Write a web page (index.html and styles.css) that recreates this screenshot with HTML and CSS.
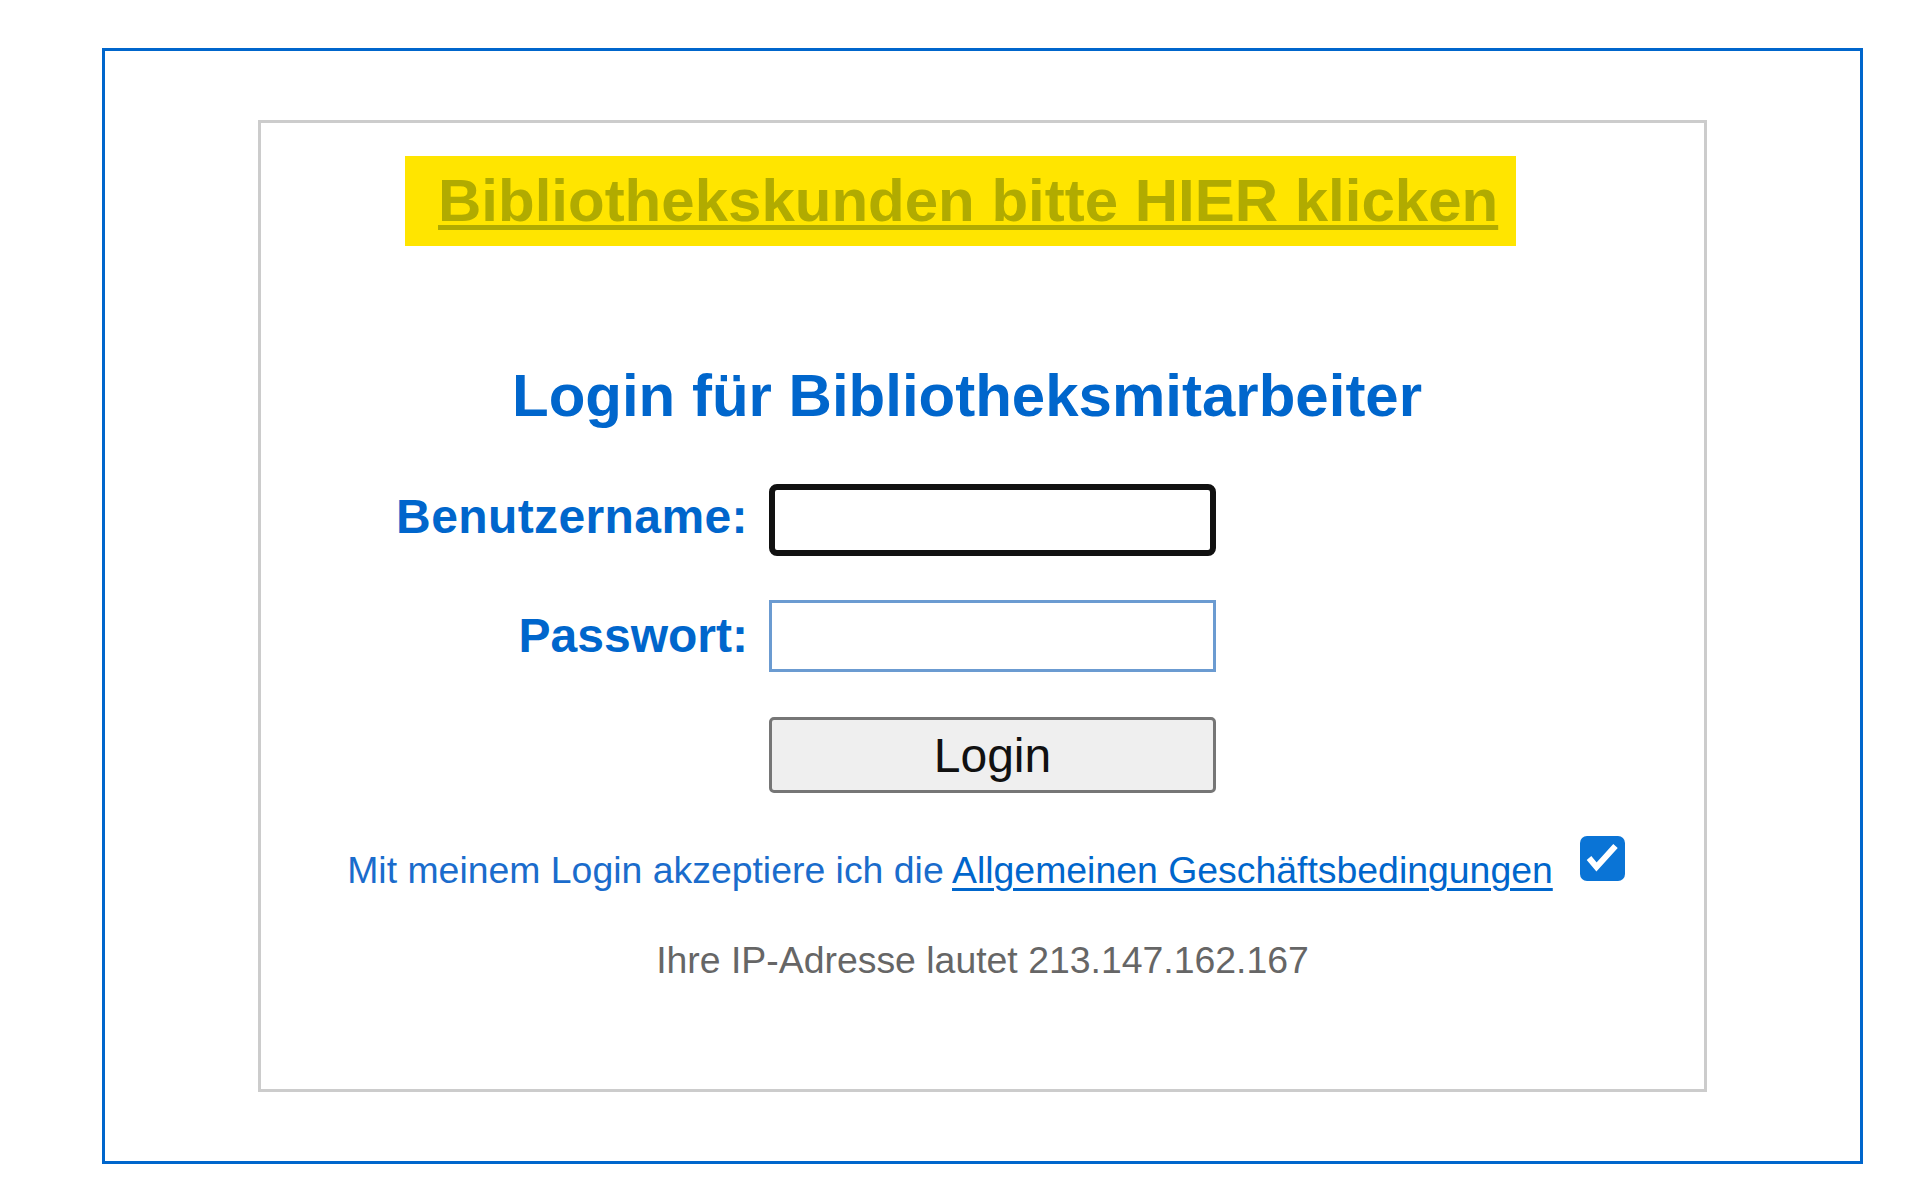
FILE: index.html
```html
<!DOCTYPE html>
<html lang="de">
<head>
    <meta charset="UTF-8">
    <meta name="viewport" content="width=device-width, initial-scale=1.0">
    <title>Login</title>
    <link rel="stylesheet" href="styles.css">
</head>
<body>
    <div class="frame">
        <div class="panel">
            <a href="#" class="customer-link">Bibliothekskunden bitte HIER klicken</a>

            <h1 class="title">Login für Bibliotheksmitarbeiter</h1>

            <form class="login-form" onsubmit="return false;">
                <label for="user" class="label label-user">Benutzername:</label>
                <input type="text" id="user" class="field field-focus">
                <label for="pass" class="label">Passwort:</label>
                <input type="password" id="pass" class="field">
                <span></span>
                <button type="submit" class="login-btn">Login</button>
            </form>

            <p class="terms">Mit meinem Login akzeptiere ich die <a href="#">Allgemeinen Geschäftsbedingungen</a><span class="check"><svg width="45" height="45" viewBox="0 0 45 45"><rect width="45" height="45" rx="7" fill="#0a74d6"/><polyline points="9,22 16.5,31 35.5,10" fill="none" stroke="#fff" stroke-width="6"/></svg></span></p>

            <p class="ip">Ihre IP-Adresse lautet 213.147.162.167</p>
        </div>
    </div>
</body>
</html>
```

FILE: styles.css
```css
body {
    margin: 0;
    font-family: "Liberation Sans", Arial, sans-serif;
    background: #fff;
}

.frame {
    box-sizing: border-box;
    width: 1761px;
    height: 1116px;
    margin: 48px 0 0 102px;
    padding: 69px 0 0 153px;
    border: 3px solid #0066cc;
}

.panel {
    box-sizing: border-box;
    width: 1449px;
    height: 972px;
    padding-top: 33px;
    border: 3px solid #cccccc;
}

.customer-link {
    display: block;
    width: fit-content;
    height: 90px;
    margin-left: 144px;
    padding: 0 18px 0 33px;
    background: #ffe500;
    color: #b1ab00;
    font-size: 60px;
    font-weight: bold;
    line-height: 90px;
    white-space: nowrap;
    text-decoration: underline;
    text-decoration-thickness: 5px;
    text-underline-offset: 4px;
}

.title {
    margin: 114px 0 0 251px;
    color: #0066cc;
    font-size: 60px;
    font-weight: bold;
    line-height: 72px;
}

.login-form {
    display: grid;
    grid-template-columns: 487px 447px;
    column-gap: 21px;
    row-gap: 44px;
    align-items: center;
    margin-top: 52px;
}

.label {
    text-align: right;
    color: #0066cc;
    font-size: 48px;
    font-weight: bold;
    line-height: 56px;
}

.label-user {
    margin-bottom: 6px;
    letter-spacing: 0.4px;
}

.field {
    box-sizing: border-box;
    width: 447px;
    height: 72px;
    margin: 0;
    padding: 0 10px;
    border: 3px solid #6b9bd1;
    background: #fff;
    font-family: "Liberation Sans", Arial, sans-serif;
    font-size: 40px;
}

.field-focus {
    border: 6px solid #111;
    border-radius: 8px;
    outline: none;
}

.login-btn {
    box-sizing: border-box;
    width: 447px;
    height: 76px;
    margin: 1px 0 0;
    padding: 0;
    border: 3px solid #767676;
    border-radius: 5px;
    background: #efefef;
    color: #111;
    font-family: "Liberation Sans", Arial, sans-serif;
    font-size: 48px;
    cursor: pointer;
}

.terms {
    margin: 43px 0 0;
    padding-left: 7px;
    text-align: center;
    color: #1a6ccc;
    font-size: 37.4px;
    line-height: 44px;
    white-space: nowrap;
}

.terms a {
    color: #0066cc;
    text-decoration-thickness: 3px;
    text-underline-offset: 5px;
}

.check {
    display: inline-block;
    margin-left: 27px;
    vertical-align: 2px;
}

.check svg {
    display: block;
}

.ip {
    margin: 46px 0 0;
    text-align: center;
    color: #666;
    font-size: 37.4px;
    line-height: 44px;
}
```
